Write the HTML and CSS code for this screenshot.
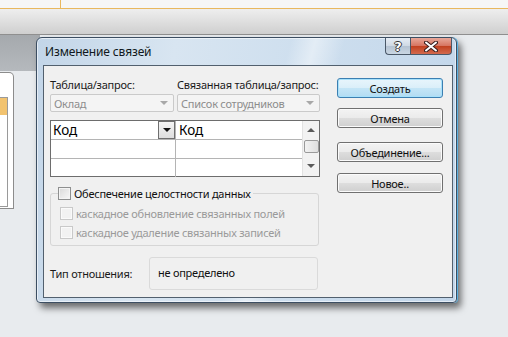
FILE: index.html
```html
<!DOCTYPE html>
<html lang="ru">
<head>
<meta charset="utf-8">
<title>Изменение связей</title>
<link rel="stylesheet" href="styles.css">
</head>
<body>
<div class="desk">
  <div class="topstrip"><div class="toptab"></div></div>
  <div class="ribbon"></div>
  <div class="work">
    <div class="side">
      <div class="side-head"></div>
      <div class="nav"><div class="nav-inner"><div class="nav-sel"></div></div></div>
    </div>
  </div>

  <div class="dialog">
    <div class="titlebar">
      <span class="title">Изменение связей</span>
      <div class="caption-btns">
        <div class="cbtn help"><span>?</span></div>
        <div class="cbtn close">
          <svg width="14" height="11" viewBox="0 0 14 11"><path d="M2 1.5 L12 9.5 M12 1.5 L2 9.5" stroke="#3a2020" stroke-width="4" stroke-linecap="round"/><path d="M2 1.5 L12 9.5 M12 1.5 L2 9.5" stroke="#ffffff" stroke-width="2" stroke-linecap="round"/></svg>
        </div>
      </div>
    </div>

    <div class="client">
      <div class="left">
        <div class="combos">
          <div class="field f1">
            <div class="lbl">Таблица/запрос:</div>
            <div class="combo"><span>Оклад</span><i class="arr"></i></div>
          </div>
          <div class="field f2">
            <div class="lbl">Связанная таблица/запрос:</div>
            <div class="combo"><span>Список сотрудников</span><i class="arr"></i></div>
          </div>
        </div>

        <div class="grid">
          <div class="rows">
            <div class="row"><div class="cell ca">Код<div class="dd"><i></i></div></div><div class="cell cb">Код</div></div>
            <div class="row"><div class="cell ca"></div><div class="cell cb"></div></div>
            <div class="row last"><div class="cell ca"></div><div class="cell cb"></div></div>
          </div>
          <div class="vscroll">
            <i class="up"></i>
            <div class="thumb"></div>
            <i class="down"></i>
          </div>
        </div>

        <fieldset class="group">
          <legend><span class="chk"><i class="box"></i>Обеспечение целостности данных</span></legend>
          <div class="chk dis"><i class="box"></i>каскадное обновление связанных полей</div>
          <div class="chk dis"><i class="box"></i>каскадное удаление связанных записей</div>
        </fieldset>

        <div class="typerow">
          <span class="typelbl">Тип отношения:</span>
          <div class="typebox">не определено</div>
        </div>
      </div>

      <div class="buttons">
        <div class="btn def">Создать</div>
        <div class="btn b2">Отмена</div>
        <div class="btn b3">Объединение...</div>
        <div class="btn b4">Новое..</div>
      </div>
    </div>
  </div>
</div>
</body>
</html>
```

FILE: styles.css
```css
* { box-sizing: border-box; }
html, body { margin: 0; padding: 0; }
body {
  width: 508px;
  height: 337px;
  overflow: hidden;
  font-family: "Noto Sans", "Open Sans", sans-serif;
  font-size: 11px;
  letter-spacing: -0.25px;
  color: #000;
}
.desk {
  position: relative;
  width: 508px;
  height: 337px;
  background: #e8ebee;
}
.topstrip {
  height: 9px;
  background: #f6f6f6;
  border-bottom: 1px solid #e9b85e;
}
.toptab {
  width: 61px;
  height: 8px;
  border-right: 1px solid #e9b85e;
}
.ribbon {
  height: 26px;
  background: linear-gradient(#eeeeee, #e2e2e2 40%, #cfcfcf);
  border-bottom: 1px solid #8f8f8f;
}
.work { display: flex; }
.side { width: 40px; }
.side-head {
  height: 36px;
  background: linear-gradient(#a5a9ad, #b5b9bd);
}
.nav {
  margin-top: 1px;
  width: 14px;
  height: 137px;
  background: #fff;
  border: 1px solid #8c8c8c;
  border-left: none;
  border-radius: 0 5px 0 0;
  padding-top: 24px;
}
.nav-inner {
  width: 8px;
  height: 110px;
  border: 1px solid #9a9a9a;
  border-left: none;
}
.nav-sel {
  height: 17px;
  background: #f2c36f;
}

/* dialog window */
.dialog {
  position: absolute;
  left: 36px;
  top: 37px;
  width: 421px;
  height: 266px;
  border: 1px solid #3c4e62;
  border-radius: 6px 6px 4px 4px;
  background:
    linear-gradient(105deg, rgba(255,255,255,0) 52%, rgba(255,255,255,.45) 57%, rgba(255,255,255,0) 63%),
    linear-gradient(100deg, #c2d5e8 0%, #d8e5f1 30%, #cddeee 60%, #c2d6ea 100%);
  box-shadow: inset 0 0 0 1px rgba(255,255,255,.55), 1px 0 0 #5ab0e0, 4px 5px 7px rgba(0,0,0,.55);
  display: flex;
  flex-direction: column;
}
.titlebar {
  height: 27px;
  display: flex;
  justify-content: space-between;
  align-items: flex-start;
  padding: 0 4px 0 8px;
}
.title {
  margin-top: 5px;
  font-size: 12px;
  letter-spacing: -0.15px;
  color: #101820;
}
.caption-btns { display: flex; }
.cbtn {
  height: 17px;
  border: 1px solid #4a5868;
  border-top: none;
  display: flex;
  align-items: center;
  justify-content: center;
}
.help {
  width: 25px;
  border-radius: 0 0 0 4px;
  border-right: none;
  background: linear-gradient(#e6edf5, #cfd9e4 50%, #b5c3d2 51%, #c9d6e3);
}
.help span {
  font-family: "DejaVu Sans", sans-serif;
  font-weight: bold;
  font-size: 13px;
  color: #fff;
  line-height: 1;
  letter-spacing: 0;
  text-shadow: 1px 0 0 #333, -1px 0 0 #333, 0 1px 0 #333, 0 -1px 0 #333;
}
.close {
  width: 42px;
  border-radius: 0 0 4px 0;
  background: linear-gradient(#e8a89a, #d6735f 50%, #c1401f 51%, #d36a4e);
}

/* client area */
.client {
  margin: 0 0 0 6px;
  width: 410px;
  height: 233px;
  border: 1px solid #52606e;
  background: #f0f0f0;
  display: flex;
  padding: 12px 0 0 6px;
  gap: 17px;
}
.left { width: 270px; }
.combos { display: flex; gap: 3px; }
.f1 { width: 124px; }
.f2 { width: 143px; }
.lbl {
  height: 14px;
  line-height: 14px;
  white-space: nowrap;
  color: #1a1a1a;
}
.combo {
  margin-top: 2px;
  height: 18px;
  border: 1px solid #cacaca;
  border-radius: 2px;
  background: #f4f4f4;
  color: #8d8d8d;
  display: flex;
  align-items: center;
  justify-content: space-between;
  padding: 0 5px 0 3px;
  white-space: nowrap;
}
.arr {
  width: 0; height: 0;
  border-left: 4px solid transparent;
  border-right: 4px solid transparent;
  border-top: 4px solid #a8a8a8;
}

/* grid */
.grid {
  margin-top: 8px;
  height: 57px;
  border: 1px solid #6d6d6d;
  background: #fff;
  display: flex;
}
.rows { flex: 1; }
.row {
  display: flex;
  height: 19px;
  border-bottom: 1px solid #b4b4b4;
}
.row.last { border-bottom: none; height: 18px; }
.cell {
  height: 100%;
  font-size: 13.5px;
  letter-spacing: 0;
  line-height: 18px;
  padding-left: 2px;
}
.ca {
  width: 125px;
  border-right: 1px solid #b4b4b4;
  display: flex;
  justify-content: space-between;
}
.cb { flex: 1; padding-left: 3px; }
.dd {
  width: 17px;
  height: 18px;
  border: 1px solid #6f6f6f;
  background: linear-gradient(#f4f4f4, #dedede);
  display: flex;
  align-items: center;
  justify-content: center;
}
.dd i {
  width: 0; height: 0;
  border-left: 4px solid transparent;
  border-right: 4px solid transparent;
  border-top: 4px solid #111;
}
.vscroll {
  width: 17px;
  border-left: 1px solid #e2e2e2;
  background: #f2f2f2;
  display: flex;
  flex-direction: column;
  align-items: center;
}
.vscroll .up {
  margin-top: 7px;
  width: 0; height: 0;
  border-left: 4px solid transparent;
  border-right: 4px solid transparent;
  border-bottom: 4px solid #5a5a5a;
}
.thumb {
  margin-top: 8px;
  width: 15px;
  height: 13px;
  border: 1px solid #9a9a9a;
  border-radius: 2px;
  background: linear-gradient(90deg, #f2f2f2, #dedede);
}
.vscroll .down {
  margin-top: 11px;
  width: 0; height: 0;
  border-left: 4px solid transparent;
  border-right: 4px solid transparent;
  border-top: 4px solid #5a5a5a;
}

/* group box */
.group {
  margin: 10px 0 0 0;
  width: 269px;
  height: 59px;
  border: 1px solid #d6d6d6;
  border-radius: 3px;
  padding: 1px 0 0 9px;
}
.group legend {
  padding: 0 2px 0 0;
  margin-left: -2px;
  height: 13px;
}
.chk {
  display: flex;
  align-items: center;
  height: 13px;
  line-height: 13px;
  white-space: nowrap;
  color: #111;
}
.chk .box {
  width: 13px;
  height: 13px;
  margin-right: 3px;
  border: 1px solid #8e8f8f;
  background: linear-gradient(135deg, #d9d9d9, #f8f8f8);
  box-shadow: inset 0 0 0 1px #f4f4f4;
}
.chk.dis { color: #9a9a9a; margin-top: 6px; }
.chk.dis + .chk.dis { margin-top: 6px; }
.chk.dis .box {
  border-color: #c9c9c9;
  background: #f2f2f2;
  box-shadow: inset 0 0 0 1px #fafafa;
}

/* type row */
.typerow {
  margin-top: 11px;
  display: flex;
  align-items: center;
}
.typelbl { width: 99px; color: #1a1a1a; }
.typebox {
  width: 169px;
  height: 33px;
  border: 1px solid #dadada;
  border-radius: 3px;
  padding: 0 0 2px 8px;
  display: flex;
  align-items: center;
  color: #111;
}

/* buttons */
.buttons { width: 106px; display: flex; flex-direction: column; }
.btn {
  height: 20px;
  border: 1px solid #707070;
  border-radius: 3px;
  background: linear-gradient(#f3f3f3, #ebebeb 48%, #dddddd 52%, #cfcfcf);
  box-shadow: inset 0 0 0 1px #fbfbfb;
  display: flex;
  align-items: center;
  justify-content: center;
  color: #111;
}
.btn.def {
  border-color: #3c7fb1;
  background: linear-gradient(#e8f5fc, #dbeff9 48%, #c4e5f6 52%, #b2dcf3);
  box-shadow: inset 0 0 0 1px #a7e1fb;
}
.b2 { margin-top: 10px; }
.b3 { margin-top: 14px; }
.b4 { margin-top: 11px; }
```
